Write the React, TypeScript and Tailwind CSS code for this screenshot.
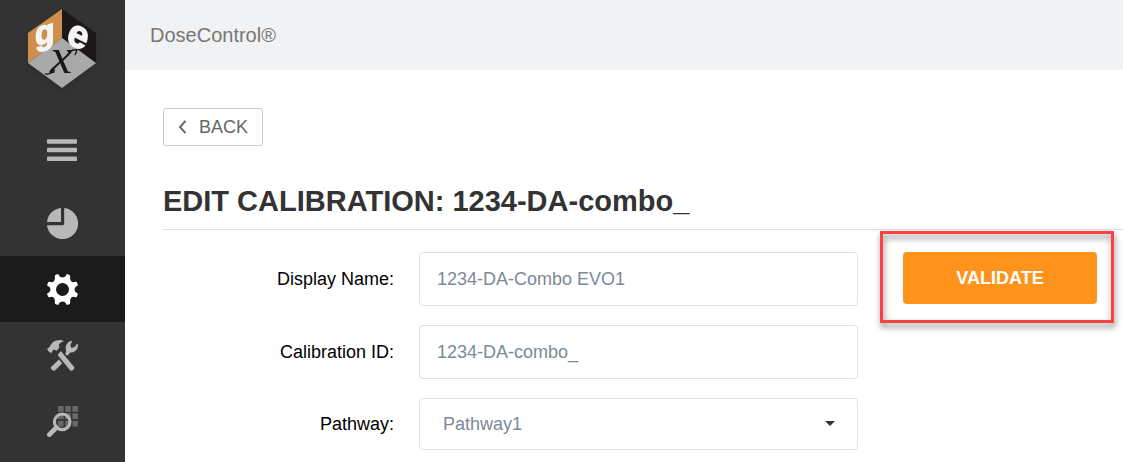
import { useState } from 'react';
import type { ReactNode } from 'react';

interface NavItem {
  label: string;
  icon: ReactNode;
  active?: boolean;
}

function Logo() {
  return (
    <svg viewBox="0 0 72 84" className="w-[72px] h-[84px] drop-shadow-md" role="img" aria-label="gex">
      <polygon points="35,2 35,31 1,56 1,26" fill="#cd8f4b" />
      <polygon points="35,2 69,26 69,56 35,31" fill="#1c1718" />
      <polygon points="35,31 69,56 35,81 1,56" fill="#a9a9a7" />
      <g fontFamily="'Liberation Sans', Arial, sans-serif" fontWeight="700" fill="#f4f4f4" stroke="#f4f4f4" strokeWidth="1.4">
        <text transform="translate(8 39) rotate(-14) skewX(-14)" fontSize="33">g</text>
        <text transform="translate(38 35) rotate(26) skewX(6)" fontSize="38">e</text>
      </g>
      <text
        x="23"
        y="66"
        fontFamily="'Liberation Serif', 'Times New Roman', serif"
        fontStyle="italic"
        fontSize="50"
        fill="#1c1718"
      >
        x
      </text>
      <path d="M28 63Q23 68 18 67M43 45Q46 42 50 43L48 48" fill="none" stroke="#1c1718" strokeWidth="1.4" />
    </svg>
  );
}

function MenuIcon() {
  return (
    <svg viewBox="0 0 31 23" className="w-[31px] h-[23px]" fill="currentColor">
      <rect x="0" y="0.2" width="30" height="4.5" rx="0.8" />
      <rect x="0" y="8.8" width="30" height="4.5" rx="0.8" />
      <rect x="0" y="17.5" width="30" height="4.5" rx="0.8" />
    </svg>
  );
}

function PieIcon() {
  return (
    <svg viewBox="0 0 31 31" className="w-[31px] h-[31px]" fill="currentColor">
      <path d="M14 0V14H0A15.5 15.5 0 0 1 14 0Z" />
      <path d="M17.2 0A15.6 15.6 0 1 1 0 17.2H15.4Q17.2 17.2 17.2 15.4Z" />
    </svg>
  );
}

function GearIcon() {
  return (
    <svg viewBox="0 0 31 31" className="w-[31px] h-[31px]" fill="currentColor">
      <path
        fillRule="evenodd"
        d="M8.2 1.1 11.2 0 12.2 1.8Q13 3.4 15.5 3.4T18.8 1.8L19.8 0 22.8 1.1 23.2 2.6Q22.6 5 24 7T28.4 7.8L29.7 8.1 31 11.2 29.2 12.4Q27.5 13.5 27.5 15.5T29.2 18.6L31 19.8 29.7 22.9 28.4 23.2Q25.4 22 24 24T23.2 28.4L22.8 29.9 19.8 31 18.8 29.2Q18 27.6 15.5 27.6T12.2 29.2L11.2 31 8.2 29.9 7.8 28.4Q8.4 26 7 24T2.6 23.2L1.3 22.9 0 19.8 1.8 18.6Q3.5 17.5 3.5 15.5T1.8 12.4L0 11.2 1.3 8.1 2.6 7.8Q5.6 9 7 7T7.8 2.6ZM15.5 9A6.5 6.5 0 1 0 15.5 22A6.5 6.5 0 1 0 15.5 9Z"
      />
    </svg>
  );
}

function ToolsIcon() {
  return (
    <svg viewBox="0 0 31 31" className="w-[31px] h-[31px]" fill="currentColor">
      <path d="M0 9 2.2 7.2 2.8 6.4Q5.5 .8 11 .2 14.5-.2 17.2 1.2 13 2 11.7 5.2L12.6 7.2 9.4 11 7.5 9.5 6 9.9 4.4 13.1Q1.5 12.4 0 9Z" />
      <path d="M13.8 11 27.4 27.2Q27 30.8 23.4 30.8L10.6 14.9Z" />
      <path d="M12 19.4 15.2 23.2 7.7 30.8Q3.8 30.5 3.8 27.2Z" />
      <path d="M18 13.7 19.2 12 18.7 7.8Q18.8 3.3 23 1.2L25.2 .8 23.4 5.2 24.2 7.8 27.2 7.3 30.2 3.8 31 4.8Q31.2 9.4 28 11.3 25.8 12.7 23.2 12.5L20.4 15.7Z" />
    </svg>
  );
}

function SearchGridIcon() {
  return (
    <svg viewBox="0 0 31 31" className="w-[31px] h-[31px]">
      <g fill="#686868">
        {[0, 7.2, 14.8].map((y) =>
          [11, 18.2, 25.4].map((x) => <rect key={`${x}-${y}`} x={x} y={y} width="5.6" height="5.8" />)
        )}
      </g>
      <circle cx="15.2" cy="15.8" r="7.8" fill="none" stroke="currentColor" strokeWidth="3.2" />
      <path d="M2.4 28.6 9.2 21.8" stroke="currentColor" strokeWidth="4.8" strokeLinecap="round" />
    </svg>
  );
}

const navItems: NavItem[] = [
  { label: 'Dashboard', icon: <PieIcon /> },
  { label: 'Settings', icon: <GearIcon />, active: true },
  { label: 'Tools', icon: <ToolsIcon /> },
  { label: 'Search', icon: <SearchGridIcon /> }
];

function Sidebar() {
  return (
    <aside className="w-[125px] shrink-0 bg-[#333333] text-[#b8b8b8]">
      <div className="h-[110px] pt-[7px] flex items-start justify-center">
        <Logo />
      </div>
      <button type="button" aria-label="Menu" className="w-full h-20 flex items-center justify-center">
        <MenuIcon />
      </button>
      <nav>
        {navItems.map((item) => (
          <a
            key={item.label}
            href="#"
            aria-label={item.label}
            className={`h-[66px] flex items-center justify-center ${item.active ? 'bg-[#1a1a1a] text-white' : ''}`}
          >
            {item.icon}
          </a>
        ))}
      </nav>
    </aside>
  );
}

const labelClass = 'w-[231px] shrink-0 text-right text-black';
const fieldClass = 'w-full rounded border border-[#dee0e2] bg-white text-[#7b8a96] outline-none';

export default function App() {
  const [name, setName] = useState('1234-DA-Combo EVO1');
  const [calibrationId, setCalibrationId] = useState('1234-DA-combo_');

  return (
    <div className="min-h-screen flex bg-white text-lg font-['Liberation_Sans',Arial,sans-serif]">
      <Sidebar />
      <div className="flex-1 min-w-0">
        <header className="h-[70px] px-[25px] flex items-center bg-[#f1f2f4] text-xl text-[#777777]">
          DoseControl®
        </header>
        <main className="pt-[38px] pl-[38px]">
          <button
            type="button"
            className="w-[100px] h-[38px] pl-[14px] flex items-center gap-3 rounded-[3px] border border-[#cccccc] text-[#666666]"
          >
            <svg viewBox="0 0 9 14" className="w-[9px] h-[14px]" fill="none" stroke="currentColor" strokeWidth="2">
              <path d="M7.5 0.8 2 7 7.5 13.2" />
            </svg>
            BACK
          </button>
          <h1 className="h-[84px] pt-[35px] border-b border-[#dddfe1] text-[29px] leading-10 font-bold text-[#333333]">
            EDIT CALIBRATION: 1234-DA-combo_
          </h1>
          <form className="pt-[22px] pr-[26px] flex items-start gap-[45px]" onSubmit={(e) => e.preventDefault()}>
            <div className="flex-1 min-w-0 flex flex-col gap-[19px]">
              <div className="flex items-center gap-[25px]">
                <label htmlFor="name" className={labelClass}>Display Name:</label>
                <input
                  id="name"
                  type="text"
                  value={name}
                  onChange={(e) => setName(e.target.value)}
                  className={`${fieldClass} h-[54px] px-[17px]`}
                />
              </div>
              <div className="flex items-center gap-[25px]">
                <label htmlFor="calibration" className={labelClass}>Calibration ID:</label>
                <input
                  id="calibration"
                  type="text"
                  value={calibrationId}
                  onChange={(e) => setCalibrationId(e.target.value)}
                  className={`${fieldClass} h-[54px] px-[17px]`}
                />
              </div>
              <div className="flex items-center gap-[25px]">
                <label htmlFor="pathway" className={labelClass}>Pathway:</label>
                <div className="relative w-full">
                  <select id="pathway" className={`${fieldClass} h-[52px] block appearance-none px-[23px]`}>
                    <option>Pathway1</option>
                  </select>
                  <svg
                    viewBox="0 0 10 5"
                    className="absolute right-[23px] top-[23px] w-[10px] h-[5px] pointer-events-none"
                    fill="#333333"
                  >
                    <path d="M0 0H10L5 5Z" />
                  </svg>
                </div>
              </div>
            </div>
            <div className="relative w-[194px] shrink-0">
              <button type="submit" className="w-full h-[52px] rounded bg-[#ff931c] font-bold text-white">
                VALIDATE
              </button>
              <div className="absolute -left-[23px] -right-[17px] -top-[21px] -bottom-[19px] border-[3px] border-[#fb4143] drop-shadow-[1px_4px_3px_rgba(0,0,0,0.5)] pointer-events-none" />
            </div>
          </form>
        </main>
      </div>
    </div>
  );
}
